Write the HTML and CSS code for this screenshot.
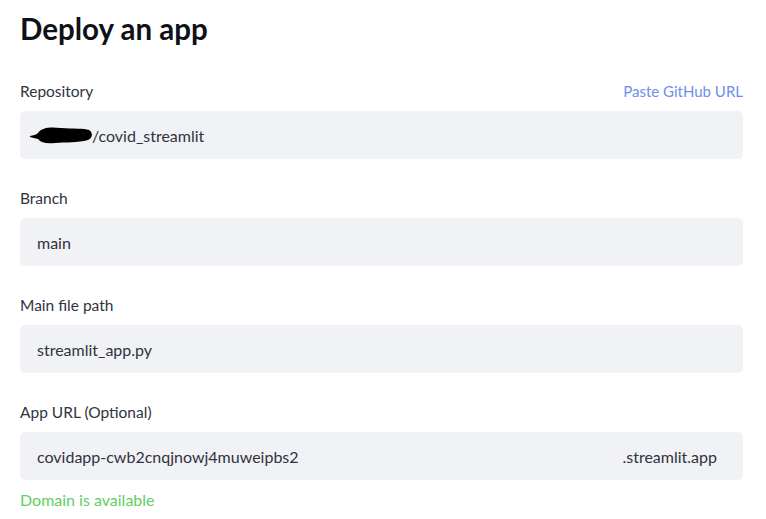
FILE: index.html
```html
<!DOCTYPE html>
<html lang="en">
<head>
  <meta charset="UTF-8">
  <title>Deploy an app</title>
  <link rel="stylesheet" href="styles.css">
</head>
<body>
  <div class="deploy-form">
    <h1>Deploy an app</h1>

    <!-- Repository -->
    <div class="field">
      <div class="field-label">
        <span>Repository</span>
        <a class="field-link" href="#">Paste GitHub URL</a>
      </div>
      <div class="field-input">
        <svg class="redacted" width="64" height="22" viewBox="0 0 64 22">
          <path d="M1 12 C4 11 7 11 9 9 C13 3 22 3 32 4 C44 5 55 4 60 6 C64 8 64 14 59 16 C49 19 36 18 26 19 C18 20 12 19 9 15 C6 14 3 14 1 13 Z" fill="#000"/>
        </svg>
        <span>/covid_streamlit</span>
      </div>
    </div>

    <!-- Branch -->
    <div class="field">
      <div class="field-label"><span>Branch</span></div>
      <div class="field-input"><span>main</span></div>
    </div>

    <!-- Main file path -->
    <div class="field">
      <div class="field-label"><span>Main file path</span></div>
      <div class="field-input"><span>streamlit_app.py</span></div>
    </div>

    <!-- App URL -->
    <div class="field">
      <div class="field-label"><span>App URL (Optional)</span></div>
      <div class="field-input">
        <span>covidapp-cwb2cnqjnowj4muweipbs2</span>
        <span class="suffix">.streamlit.app</span>
      </div>
      <p class="field-ok">Domain is available</p>
    </div>
  </div>
</body>
</html>
```

FILE: styles.css
```css
/* Reset */
* {
  margin: 0;
  padding: 0;
  box-sizing: border-box;
}

body {
  font-family: Lato, "Noto Sans", sans-serif;
  background-color: #fff;
  color: #31333f;
}

/* Form wrapper */
.deploy-form {
  width: 723px;
  margin-left: 20px;
  padding-top: 10px;
}

.deploy-form h1 {
  font-size: 29.5px;
  font-weight: 700;
  color: #0e1117;
  line-height: 38px;
  margin-bottom: 33px;
}

/* Field */
.field {
  margin-bottom: 29px;
}

.field-label {
  display: flex;
  justify-content: space-between;
  align-items: center;
  font-size: 15.5px;
  line-height: 20px;
  margin-bottom: 10px;
}

.field-link {
  color: #6f8fe6;
  font-size: 15px;
  text-decoration: none;
}

.field-input {
  display: flex;
  align-items: center;
  height: 48px;
  padding: 0 26px 0 17px;
  background-color: #f0f2f6;
  border-radius: 5px;
  font-size: 16px;
}

.redacted {
  margin-left: -8px;
  margin-right: -1px;
}

.suffix {
  margin-left: auto;
}

.field-ok {
  margin-top: 10px;
  font-size: 16px;
  color: #62cf62;
}
```
